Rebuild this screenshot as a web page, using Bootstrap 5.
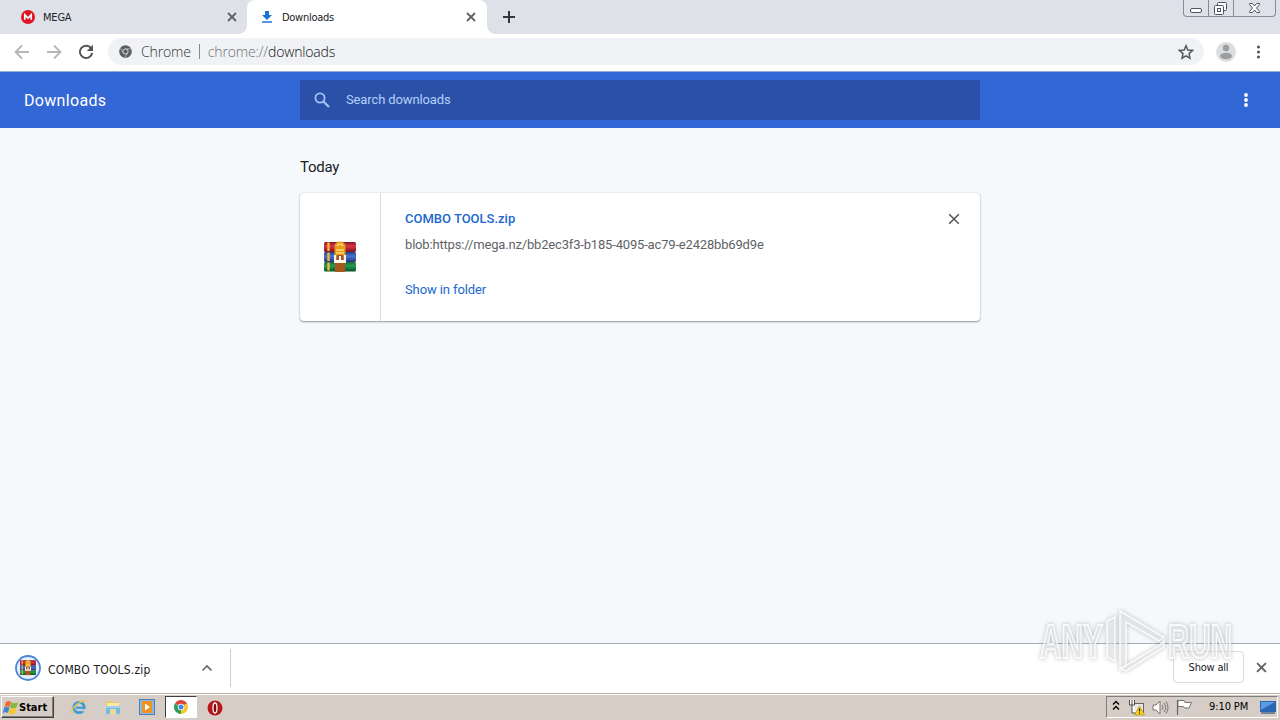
<!DOCTYPE html>
<html lang="en">
<head>
<meta charset="utf-8">
<meta name="viewport" content="width=device-width, initial-scale=1">
<title>Downloads</title>
<link href="https://cdn.jsdelivr.net/npm/bootstrap@5.3.0/dist/css/bootstrap.min.css" rel="stylesheet">
<style>
  body { height: 720px; font-family: Roboto, sans-serif; font-size: 13px; line-height: 16px; background: #f5f9fc; color: #202124; }
  svg { display: block; flex: none; }
  .ui { font-family: "DejaVu Sans Condensed", "DejaVu Sans", sans-serif; font-stretch: condensed; }
  .tabstrip { height: 34px; background: #dee1e8; }
  .tab { height: 34px; font-size: 11px; }
  .tab span { padding-top: 1px; margin-left: 8px; }
  .tab-mega { width: 247px; padding: 0 10px 0 21px; }
  .tab-active { width: 240px; background: #fff; border-radius: 8px 8px 0 0; padding: 0 11px 0 13px; }
  .tab-active::before, .tab-active::after { content: ""; position: absolute; bottom: 0; width: 8px; height: 8px; }
  .tab-active::before { left: -8px; background: radial-gradient(circle at 0 0, transparent 7.5px, #fff 8px); }
  .tab-active::after { right: -8px; background: radial-gradient(circle at 100% 0, transparent 7.5px, #fff 8px); }
  .wincontrols { height: 17px; border: 1px solid #858b9a; border-top: 0; border-radius: 0 0 4px 4px; }
  .wincontrols > div + div { border-left: 1px solid #858b9a; }
  .toolbar { height: 38px; background: #fff; border-bottom: 1px solid #91aed1; padding: 0 14px 2px 14px; }
  .omnibox { height: 27px; background: #f0f2f5; border-radius: 14px; padding: 0 10px 0 11px; font: 14px/27px "Open Sans", sans-serif; font-weight: 300; color: #303338; letter-spacing: -.15px; }
  .omnibox .scheme { color: #6c7075; }
  .omnibox .host { color: #101114; }
  .appbar { height: 56px; background: #3367d6; color: #fff; }
  .appbar h1 { width: 276px; font-size: 16px; line-height: 20px; letter-spacing: .32px; font-weight: 400; }
  .searchbox { width: 680px; height: 40px; background: #2a50a7; color: #b4d0fa; padding-left: 14px; }
  .content { width: 680px; padding-top: 29px; }
  .content h2 { font-size: 15px; line-height: 20px; letter-spacing: -.25px; font-weight: 400; margin-bottom: 16px; }
  .item { height: 128px; border-radius: 4px; box-shadow: 0 1px 2px rgba(60,64,67,.5), 0 0 1px rgba(60,64,67,.3); background: #fff; }
  .item-icon { width: 81px; border-right: 1px solid #d8dadd; padding-bottom: 1px; }
  .item-body { padding: 18px 20px 0 24px; }
  .item a { color: #2068cf; text-decoration: none; }
  .blob { margin-top: 10px; color: #5f6368; letter-spacing: -.172px; }
  .shelf { height: 50px; background: #fff; border-top: 1px solid #a9adb2; padding-right: 13px; }
  .shelf-item { width: 231px; height: 38px; margin-top: 5px; border-right: 1px solid #cdcfd3; padding: 0 17px 0 15px; font-size: 12px; letter-spacing: .17px; }
  .showall { width: 71px; height: 32px; border: 1px solid #dadce0; border-radius: 4px; font-size: 11px; letter-spacing: -.2px; background: #fff; padding-top: 1px; }
  .taskbar { height: 27px; background: #d6cec6; border-top: 1px solid #b5b1ab; box-shadow: inset 0 1px #fff; font-size: 11px; color: #000; padding: 2px 2px 0 1px; }
  .start { width: 53px; height: 22px; border: 1px solid; border-color: #fff #404040 #404040 #fff; box-shadow: inset -1px -1px #827e79; font-weight: 700; }
  .task-on { width: 32px; height: 22px; border: 1px solid; border-color: #404040 #fff #fff #404040; background: #fff; }
  .tray { width: 172px; height: 22px; border: 1px solid; border-color: #827e79 #fff #fff #827e79; }
  .watermark { right: 38px; top: 602px; pointer-events: none; filter: drop-shadow(0 0 2px rgba(105,110,115,.6)); }
</style>
</head>
<body class="d-flex flex-column overflow-hidden position-relative">

<svg width="0" height="0" class="position-absolute" aria-hidden="true">
  <defs>
    <linearGradient id="gr" x2="0" y2="1"><stop stop-color="#821726"/><stop offset=".4" stop-color="#dc3547"/><stop offset="1" stop-color="#801121"/></linearGradient>
    <linearGradient id="gb" x2="0" y2="1"><stop stop-color="#243a84"/><stop offset=".4" stop-color="#4776d1"/><stop offset="1" stop-color="#28357b"/></linearGradient>
    <linearGradient id="gg" x2="0" y2="1"><stop stop-color="#15683c"/><stop offset=".4" stop-color="#269d52"/><stop offset="1" stop-color="#075129"/></linearGradient>
    <symbol id="books" viewBox="0 0 32 31">
      <rect x="0" y="1" width="32" height="10" rx="1.5" fill="url(#gr)"/>
      <rect x="0" y="11" width="32" height="10" rx="1.5" fill="url(#gb)"/>
      <rect x="0" y="21" width="32" height="9.500" rx="1.5" fill="url(#gg)"/>
      <path d="M4.500 1.500V10M4.500 11.500V20M4.500 21.500V29.500" stroke="#f1ba37" stroke-width="2.400"/>
      <path d="M10.500 15V6Q10.500.5 16 .5T21.500 6v9z" fill="#e69b20"/>
      <path d="M13 5q3-4 6 0M12 9h8M12 12h8" stroke="#ffdb68" stroke-width="1.500" fill="none"/>
      <path d="M11 20h10v11H11z" fill="#a9581d"/>
      <path d="M10 14h2.500v5h7v-5H22v8H10z" fill="#fff7ea"/>
      <path d="M12.500 14h7v5h-7z" fill="#ad531c"/>
      <path d="M16 15v6" stroke="#fff" stroke-width="2"/>
    </symbol>
    <symbol id="cross" viewBox="0 0 10 10"><path d="M1 1l8 8M9 1L1 9" fill="none" stroke="currentColor" stroke-width="var(--w,1.800)"/></symbol>
  </defs>
</svg>

<div class="tabstrip ui d-flex">
  <div class="tab tab-mega d-flex align-items-center">
    <svg width="14" height="14" viewBox="0 0 14 14"><circle cx="7" cy="7" r="7" fill="#df1625"/><path d="M3.800 9.700V4.800L7 8l3.200-3.200v4.900" fill="none" stroke="#fff" stroke-width="1.700"/></svg>
    <span style="letter-spacing:-.2px">MEGA</span>
    <svg class="ms-auto" width="10" height="10" color="#5f6368"><use href="#cross"/></svg>
  </div>
  <div class="tab tab-active position-relative d-flex align-items-center">
    <svg width="14" height="14" viewBox="0 0 14 14"><path d="M5 1h4v4h3L7 10 2 5h3z" fill="#1a73d8"/><path d="M2 12h10" stroke="#1a73d8" stroke-width="1.500"/></svg>
    <span style="letter-spacing:-.28px">Downloads</span>
    <svg class="ms-auto" width="10" height="10" color="#5f6368"><use href="#cross"/></svg>
  </div>
  <svg style="margin:11px 0 0 16px" width="12" height="12" viewBox="0 0 12 12"><path d="M6 0v12M0 6h12" stroke="#34373c" stroke-width="2"/></svg>
  <div class="wincontrols d-flex ms-auto" style="margin-right:4px">
    <div style="width:24px"><svg width="24" height="16"><rect x="6.500" y="8.500" width="11" height="4" rx="1.500" fill="#fff" stroke="#4d525b"/></svg></div>
    <div style="width:25px"><svg width="24" height="16" fill="#fff" stroke="#4d525b"><rect x="8.500" y="2.500" width="9" height="8" rx="1"/><rect x="5.500" y="5.500" width="9" height="9" rx="1"/><rect x="8.500" y="8.500" width="3" height="3"/></svg></div>
    <div style="width:42px"><svg width="41" height="16"><path d="M15.500 3.500h3l2 2.500 2-2.500h3v1L22.500 8l3 3.500v1h-3l-2-2.500-2 2.500h-3v-1l3-3.500-3-3.500z" fill="#fff" stroke="#4d525b"/></svg></div>
  </div>
</div>

<div class="toolbar d-flex align-items-center">
  <svg width="16" height="16" viewBox="0 0 16 16" fill="none" stroke="#b4b6b9" stroke-width="1.800"><path d="M15 8H2M8 1.500L1.500 8 8 14.500"/></svg>
  <svg style="margin-left:16px" width="16" height="16" viewBox="0 0 16 16" fill="none" stroke="#b4b6b9" stroke-width="1.800"><path d="M1 8h13M8 1.500L14.500 8 8 14.500"/></svg>
  <svg style="margin-left:16px" width="16" height="16" viewBox="0 0 16 16"><path d="M13.200 4.300A6.200 6.200 0 1 0 14.200 9" fill="none" stroke="#505357" stroke-width="2"/><path d="M15 .8V7H8.800z" fill="#505357"/></svg>
  <div class="omnibox d-flex align-items-center flex-grow-1" style="margin-left:14px">
    <svg width="13" height="13" viewBox="0 0 14 14"><circle cx="7" cy="7" r="6.800" fill="#5b5f64"/><circle cx="7" cy="7" r="2.800" fill="none" stroke="#dfe1e4"/><path d="M7 4.200h6M4.600 8.400L1.600 3.500M9.400 8.400L6.500 13.300" stroke="#c5c8cc" stroke-width=".8"/></svg>
    <span style="margin-left:9px">Chrome</span>
    <span style="width:1px;height:15px;margin:0 8px;background:#85898e"></span>
    <span><span class="scheme">chrome://</span><span class="host">downloads</span></span>
    <svg class="ms-auto" width="16" height="16" viewBox="0 0 16 16"><path d="M8 1.800l1.800 4.300 4.700.4-3.500 3.100 1 4.600L8 11.800l-4 2.400 1-4.600L1.500 6.500l4.700-.4z" fill="none" stroke="#55585d" stroke-width="1.500"/></svg>
  </div>
  <svg style="margin-left:12px" width="20" height="20" viewBox="0 0 20 20"><circle cx="10" cy="10" r="10" fill="#dcdddf"/><circle cx="10" cy="6" r="3.200" fill="#9b9da0"/><ellipse cx="10" cy="14" rx="6" ry="3.200" fill="#9b9da0"/></svg>
  <svg style="margin:1px 0 0 14px" width="16" height="16" fill="#505357"><circle cx="8.500" cy="3" r="1.500"/><circle cx="8.500" cy="8" r="1.500"/><circle cx="8.500" cy="13" r="1.500"/></svg>
</div>

<header class="appbar d-flex align-items-center">
  <h1 class="mb-0" style="padding:2px 0 0 24px;margin-right:24px">Downloads</h1>
  <div class="searchbox d-flex align-items-center">
    <svg width="16" height="16" viewBox="0 0 16 16" fill="none" stroke="#a4c3f8"><circle cx="6" cy="6" r="4.600" stroke-width="1.800"/><path d="M9.500 9.500L15 15" stroke-width="2.200"/></svg>
    <span style="margin-left:16px;letter-spacing:-.12px">Search downloads</span>
  </div>
  <svg class="ms-auto" style="margin-right:26px" width="16" height="16" fill="#fff"><circle cx="8" cy="3" r="1.900"/><circle cx="8" cy="8" r="1.900"/><circle cx="8" cy="13" r="1.900"/></svg>
</header>

<main class="flex-grow-1">
  <div class="content mx-auto">
    <h2>Today</h2>
    <div class="item d-flex">
      <div class="item-icon d-flex align-items-center justify-content-center"><svg width="32" height="31"><use href="#books"/></svg></div>
      <div class="item-body flex-grow-1">
        <div class="d-flex align-items-center"><a href="#" style="font-weight:500">COMBO TOOLS.zip</a>
          <svg class="ms-auto" style="--w:1.200" width="12" height="12" color="#4c4f53"><use href="#cross"/></svg></div>
        <div class="blob">blob:https://mega.nz/bb2ec3f3-b185-4095-ac79-e2428bb69d9e</div>
        <div style="margin-top:29px;letter-spacing:-.1px"><a href="#">Show in folder</a></div>
      </div>
    </div>
  </div>
</main>

<div class="shelf ui d-flex">
  <div class="shelf-item d-flex align-items-center">
    <svg width="26" height="26" viewBox="0 0 26 26"><circle cx="13" cy="13" r="12" fill="#e7effb" stroke="#4c86d8" stroke-width="1.800"/><use href="#books" x="5" y="4.500" width="16" height="16"/></svg>
    <span style="margin:3px 0 0 7px">COMBO TOOLS.zip</span>
    <svg class="ms-auto" width="12" height="8" viewBox="0 0 12 8"><path d="M1.500 6.500L6 2l4.500 4.500" fill="none" stroke="#65696e" stroke-width="1.700"/></svg>
  </div>
  <div class="showall ms-auto d-flex align-items-center justify-content-center" style="margin-top:7px">Show all</div>
  <svg style="margin:18px 0 0 12px" width="11" height="11" color="#5f6368"><use href="#cross"/></svg>
</div>

<div class="taskbar ui d-flex">
  <div class="start d-flex align-items-center">
    <svg width="17" height="17" viewBox="0 0 17 17"><path d="M4 3q3-2 5-.2L7.600 8Q5 6.400 2.500 7.900z" fill="#ee672d"/><path d="M9.500 3.200q3 1.800 6.500 .2L14.500 8.500q-3 1.600-6.500-.1z" fill="#81b93e"/><path d="M2.200 8.500q2.700-1.500 5.200.1L6 14q-2.500-1.600-5.200-.1z" fill="#3f86d3"/><path d="M7.900 9q3 1.600 6.400 .1L12.900 14.500q-3 1.600-6.400-.1z" fill="#f8c52c"/></svg>
    <span style="padding-top:1px">Start</span>
  </div>
  <svg style="margin:3px 0 0 17px" width="16" height="16" viewBox="0 0 16 16"><circle cx="8" cy="8.500" r="5.200" fill="none" stroke="#3c9dd8" stroke-width="2.800"/><path d="M5 8.700h8.500" stroke="#3c9dd8" stroke-width="2.200"/><path d="M10 10.300h5v2h-5z" fill="#d6cec6"/><path d="M1.500 14.500C-2 10 12-1 15 2.500" fill="none" stroke="#e9c349" stroke-width="1.400"/></svg>
  <svg style="margin:3px 0 0 18px" width="16" height="16" viewBox="0 0 16 16"><path d="M1 2h5l1 1h7v10H1z" fill="#e8c766"/><path d="M2 4h12v5H2z" fill="#f9e9a5"/><path d="M1 7h14v8H1z" fill="#74bce0"/><path d="M5 15v-5h6v5z" fill="#eadb9d"/><path d="M1 8h14" stroke="#c6e7f5"/></svg>
  <svg style="margin:3px 0 0 18px" width="16" height="16" viewBox="0 0 16 16"><rect x=".5" y=".5" width="15" height="15" fill="#89b9e2" stroke="#4c80b5"/><rect x="3" y="2" width="10" height="12" fill="#f19120"/><path d="M6 4.500l5 3.500-5 3.500z" fill="#fff"/></svg>
  <div class="task-on d-flex align-items-center justify-content-center" style="margin-left:10px">
    <svg width="14" height="14" viewBox="0 0 14 14"><path d="M7 7L.94 3.500A7 7 0 0 1 13.060 3.500z" fill="#df4635"/><path d="M7 7L13.060 3.500A7 7 0 0 1 7 14z" fill="#f8c62c"/><path d="M7 7V14A7 7 0 0 1 .94 3.500z" fill="#2ca052"/><circle cx="7" cy="7" r="3.300" fill="#fff"/><circle cx="7" cy="7" r="2.500" fill="#4285e8"/></svg>
  </div>
  <svg style="margin:4px 0 0 10px" width="16" height="16" viewBox="0 0 16 16"><circle cx="8" cy="8" r="7.500" fill="#b7141b"/><ellipse cx="8" cy="8" rx="2" ry="5" fill="#7b0b10" stroke="#fff" stroke-width="1.300"/></svg>
  <div class="tray ms-auto d-flex align-items-center">
    <svg style="margin:0 0 2px 5px" width="8" height="12" viewBox="0 0 8 12" fill="none" stroke="#000" stroke-width="1.400"><path d="M1 4.500L4 1.500 7 4.500M1 9.500L4 6.500 7 9.500"/></svg>
    <svg style="margin-left:8px" width="17" height="17" viewBox="0 0 17 17"><rect x="4.500" y="4.500" width="11" height="9" fill="#e8e7e3" stroke="#65645f"/><path d="M1.500 1v5h5V1M4 1v13h4" fill="#fff" stroke="#4f4e4a"/><path d="M11.500 7L16.500 16h-10z" fill="#ffd51f" stroke="#b29a10" stroke-width=".7"/><path d="M11.500 9.500v3M11.500 13.500v1.200" stroke="#211b00" stroke-width="1.200"/></svg>
    <svg style="margin-left:7px" width="17" height="15" viewBox="0 0 17 15"><path d="M1 5h3l4-4v13L4 10H1z" fill="#fff" stroke="#77746f"/><path d="M10 5q2 2.500 0 5M12 3q3.500 4.500 0 9M14 1.500q4 6 0 12" fill="none" stroke="#77746f"/></svg>
    <svg style="margin-left:7px" width="17" height="16" viewBox="0 0 17 16"><path d="M1.500 1v15" stroke="#65635e" stroke-width="1.200"/><path d="M2 1.500h6l1 2h6.500l-2.500 5.500H8.500l-1-1.500H2z" fill="#fff" stroke="#77746f"/></svg>
    <span style="margin-left:16px;letter-spacing:-.1px">9:10 PM</span>
    <svg class="ms-auto" style="margin-right:1px" width="16" height="16" viewBox="0 0 16 16"><path d="M0 2h16v11H0z" fill="#2a66b2"/><path d="M1 3h14L1 11z" fill="#5a9ce0"/><path d="M1 14h14" stroke="#173b70"/></svg>
  </div>
</div>

<svg class="watermark position-absolute" width="206" height="76" viewBox="0 0 206 76" fill="#fff" fill-opacity=".4" stroke="#fff" stroke-opacity=".85" stroke-width="2" font-family="Liberation Sans, sans-serif" font-size="48" font-weight="700">
  <text x="4" y="56" textLength="63" lengthAdjust="spacingAndGlyphs">ANY</text>
  <path d="M71 19l8-4v44l-8-4zM84 9l44 26-5 4-33-19v44l-6 3zM84 67l40-24 4-5v7L90 69z" stroke-width="1.500"/>
  <text x="132" y="56" textLength="64" lengthAdjust="spacingAndGlyphs">RUN</text>
</svg>
<script src="https://cdn.jsdelivr.net/npm/bootstrap@5.3.0/dist/js/bootstrap.bundle.min.js"></script>
</body>
</html>
